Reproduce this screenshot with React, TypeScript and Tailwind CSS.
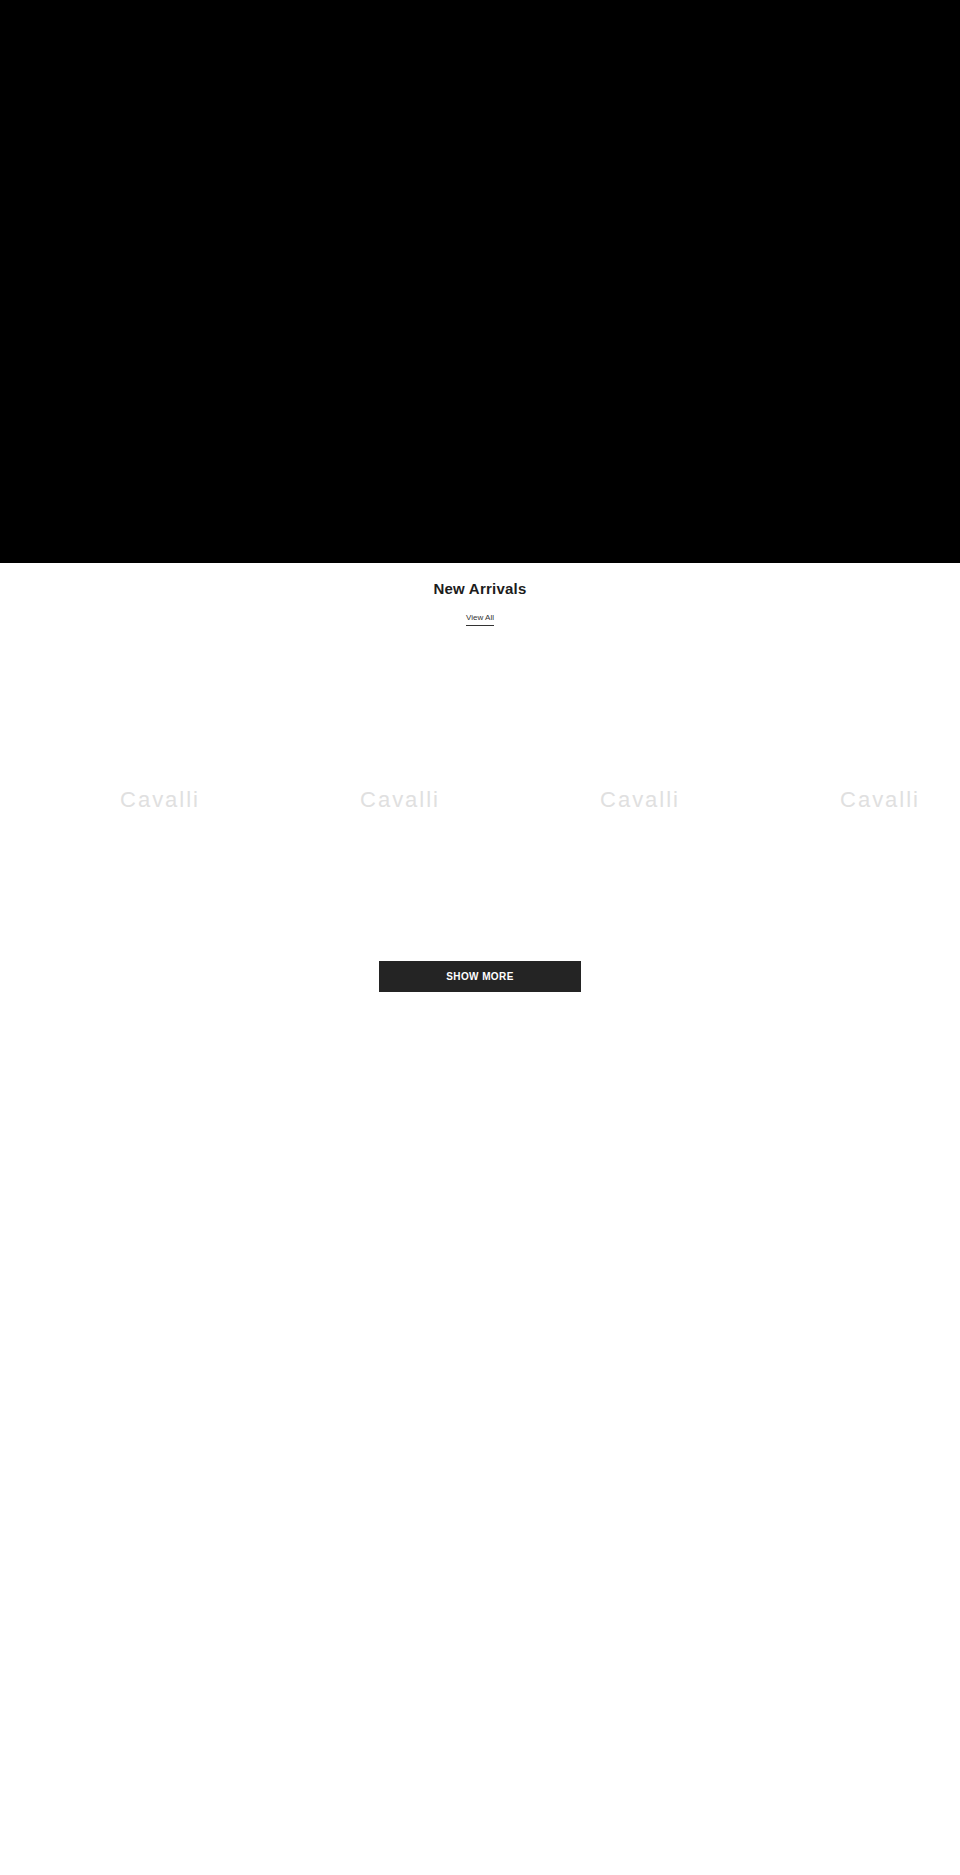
import React from 'react';

const ProductCard: React.FC = () => (
  <div className="w-[240px] shrink-0 h-[320px] flex items-center justify-center">
    <span className="text-[22px] leading-none tracking-[0.09em] text-[#e0e0e0]">Cavalli</span>
  </div>
);

export default function App() {
  return (
    <div className="w-[960px] h-[1875px] bg-white overflow-hidden font-['Liberation_Sans',Arial,sans-serif]">
      {/* Hero */}
      <section className="h-[563px] bg-black" />

      {/* New Arrivals */}
      <section className="h-[77px] flex flex-col items-center pt-[15px]">
        <h2 className="text-[15px] leading-[22px] font-bold tracking-[0.015em] text-[#1c1c1c]">New Arrivals</h2>
        <a href="#" className="mt-[12px] text-[8px] leading-[12px] text-[#333] border-b border-[#333] pb-[1px]">
          View All
        </a>
      </section>

      {/* Products */}
      <section className="flex pl-[40px]">
        <ProductCard />
        <ProductCard />
        <ProductCard />
        <ProductCard />
      </section>

      <div className="flex justify-center mt-px">
        <button className="w-[202px] h-[31px] bg-[#242424] text-white text-[10px] font-bold tracking-[0.04em]">
          SHOW MORE
        </button>
      </div>
    </div>
  );
}
